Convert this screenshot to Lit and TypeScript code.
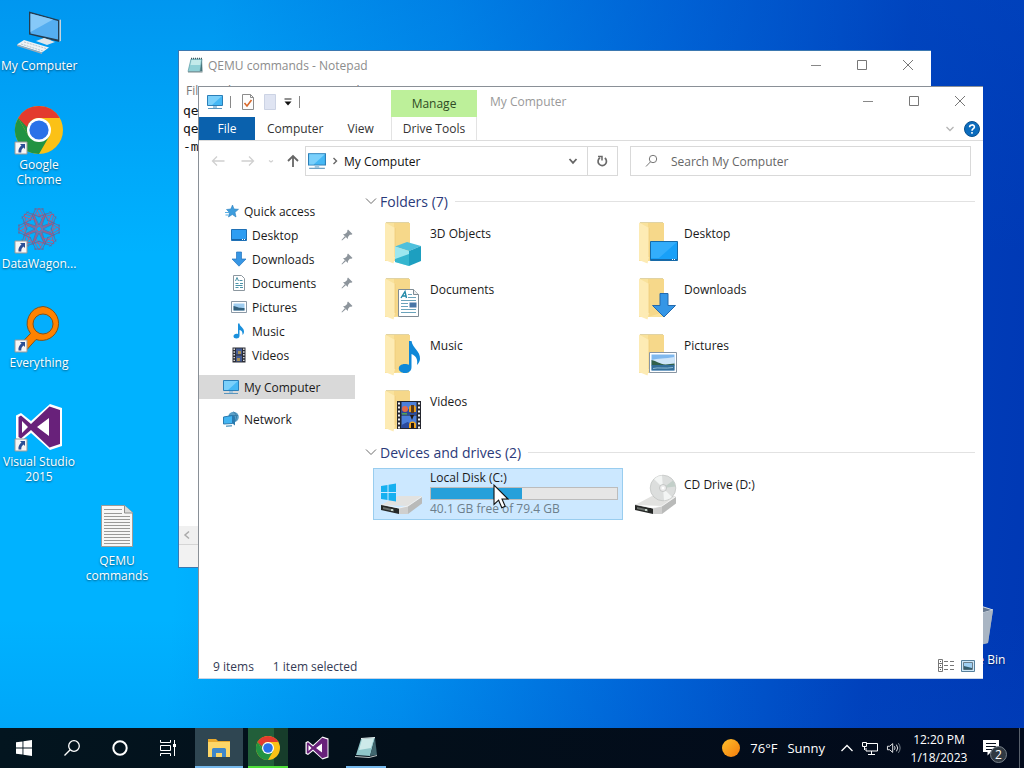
import { LitElement, html, svg, css, TemplateResult } from "lit";
import { customElement, property } from "lit/decorators.js";

const folder = svg`
  <path d="M4 4h24v38H4z" fill="#f9e29c"/>
  <path d="M13 4h16v33l-16 5z" fill="#f6d88a"/>
  <path d="M4 3.500 14 9v29l-1.500 6.500L4 41z" fill="#fdebb4"/>
  <path d="M14 9v29" stroke="#efcb78" stroke-width=".8"/>
  <path d="M5 3.500h23" stroke="#e0d3a4"/>`;

const monitor = svg`
  <path d="M.5 1.500h15v10H.5z" fill="#45b8f5" stroke="#2b7fb8"/>
  <path d="M1 2h14L5 11H1z" fill="#7bd0fb"/>
  <path d="M6 12h4v2H6z" fill="#9fc4dc"/><path d="M1 14.500h14" stroke="#5a95bd"/>`;

const arrowDown = svg`<path d="M5.500 1h5v7H15l-7 7.200L1 8h4.500z" fill="#3796e4" stroke="#2474bd" stroke-width=".7"/>`;

const filmFrame = svg`
  <path d="M16 14h24v28H16z" fill="#24262e"/>
  <path d="M20.500 15h15v12.500h-15zM20.500 28.500h15V41h-15z" fill="#4c7fda"/>
  <path d="M20.500 24l5-4 4 4 6-3v6.500h-15zM20.500 38l6-3 9 4v2h-15z" fill="#2b4a9d"/>
  <path d="M28 20a4 4 0 0 1 7 0v5h-7z" fill="#e9a020"/><path d="M30 18h3v8h-3z" fill="#5d3a16"/>
  <circle cx="24" cy="22" r="3" fill="#e36a4a"/><path d="M28 38a3.500 3.500 0 0 1 7 0v3h-7z" fill="#f0a51e"/>
  <path d="M29 28h4l-2 5zM30 36h3v5h-3z" fill="#26180d"/><path d="M21 26h5v1.500h-5z" fill="#54a455"/>
  <path d="M18 15.500v26M38 15.500v26" stroke="#f2f3f5" stroke-width="2" stroke-dasharray="2 2"/>`;

const picture = svg`
  <path d="M14.500 21.500h27v20h-27z" fill="#fff" stroke="#8795a3"/>
  <path d="M16.500 23.500h23v16h-23z" fill="#7fb8ee"/>
  <path d="M16.500 29c6-2 14-1 23-3v8h-23z" fill="#cfe5f8"/>
  <path d="M16.500 29c5 1 8 4 14 4.500l9-1v2h-23z" fill="#32604a"/>
  <path d="M16.500 34h23v5.500h-23z" fill="#346e99"/><path d="M18 37.500c5-1.500 12 .5 20-1" stroke="#8fbbd4" fill="none"/>`;

const drive = svg`
  <path d="M0 35 17 26h24L27 36z" fill="#e2e2e0"/>
  <path d="M27 36 41 26.500v7L27 44z" fill="#b9bab9"/>
  <path d="M0 34.500 18 38.500V44L0 40z" fill="#262827"/>
  <path d="M18 38l9-2v8h-9z" fill="#cfcfce"/>
  <path d="M2 37l11 2.600v2L2 39z" fill="#6a6f6c"/><circle cx="11" cy="40" r="1" fill="#e6f6e9"/>
  <path d="M0 34.500 18 38 27 36 41 26.500" fill="none" stroke="#f8f8f8" stroke-width=".8"/>`;

const chrome = svg`
  <circle cx="24" cy="24" r="24" fill="#fbc116"/>
  <path d="M3.200 12A24 24 0 0 0 24 48L34.400 30 24 24 13.600 30z" fill="#229342"/>
  <path d="M3.200 12 13.600 30 20 15z" fill="#229342"/>
  <path d="M3.200 12A24 24 0 0 1 44.800 12H24a12 12 0 0 0-12 9z" fill="#e33b2e"/>
  <circle cx="24" cy="24" r="12" fill="#fff"/><circle cx="24" cy="24" r="9.600" fill="#2a71e8"/>`;

const visualStudio = svg`
  <path d="M35 1 47 5v38l-12 4L16 30 6 38l-5-2.500v-23L6 10l10 8z" fill="#fff"/>
  <path d="M34.500 3.500 45 7v34l-10.500 3.500L16 27 6 35.500 3.500 34V14L6 12.500 16 21z" fill="#68217a"/>
  <path d="M34 15v18L22 24zM7 18l6 6-6 6z" fill="#fff"/>`;

const notepadPage = svg`
  <path d="M4 2h11l-2 12.500H1z" fill="#8fd0d6" stroke="#5b9aa3" stroke-width=".7"/>
  <path d="M4.500 3h9.500l-.8 5H3.500z" fill="#c3eaea"/>
  <path d="M15 2l.5 12.500H13z" fill="#46747b"/>
  <path d="M4 1.500h11" stroke="#415a60" stroke-width="1.500" stroke-dasharray="1 1"/>
  <path d="M1 15h14.500" stroke="#7b8b8e"/>`;

const petal = (angle: number) => svg`<g transform="rotate(${angle} 24 24)" fill="none" stroke-width=".8">
  <path d="M24 22 18.500 12 24 3l5.500 9z" stroke="#c04f74"/>
  <path d="M19 4h10M18 8l6 12 6-12M21 3l-6 13M27 3l6 13" stroke="#6a6596"/>
  <path d="M20 10h8M22 5l5 9" stroke="#d6506a"/></g>`;

const icons: Record<string, [string, TemplateResult]> = {
  monitor: ["0 0 16 16", monitor],
  desktopPc: ["0 0 48 48", svg`
    <path d="M14 4.500 44.500 13v22L14 27.500z" fill="#243c50"/>
    <path d="M15.500 6.500 43 14v18.500l-27.500-6z" fill="#55aef0"/>
    <path d="M15.500 6.500 38 12.500 15.500 25z" fill="#86c9f8"/>
    <path d="M44.500 13l1.500-.5v21l-1.500 1.500z" fill="#c5d4df"/>
    <path d="M28 31l8 2v3l-8-2z" fill="#9caab5"/>
    <path d="M21 34l8-3 11 4-8 3z" fill="#dfe6eb"/>
    <path d="M2 37.500 9 33l25 7.500-7 5z" fill="#eef2f5"/><path d="M2 37.500l25 8v1.500L2 39z" fill="#9eabb5"/>
    <path d="M6 37l22 7M9 35l22 6.500" stroke="#b9c5ce" stroke-dasharray="2 1"/>`],
  chrome: ["0 0 48 48", chrome],
  wagon: ["0 0 48 48", svg`${[0, 45, 90, 135, 180, 225, 270, 315].map(petal)}`],
  everything: ["0 0 48 48", svg`
    <path d="M28 2.500a17 17 0 1 1-7 33l-9 10-7-5 10.500-11A17 17 0 0 1 28 2.500z" fill="#ff8200" stroke="#80521c"/>
    <circle cx="28" cy="20" r="10" fill="#04aefd" stroke="#80521c"/>`],
  vs: ["0 0 48 48", visualStudio],
  textFile: ["0 0 48 48", svg`
    <path d="M8.500 3.500h23l8 7v34h-31z" fill="#f7f7f6" stroke="#9b9b98"/>
    <path d="M31.500 3.500v7.500h8" fill="#dcdcda" stroke="#8f8f8c"/>
    <path d="M11 7.500h18M11 11.500h18M11 14.500h26M11 17.500h26M11 20.500h26M11 23.500h26M11 26.500h26M11 29.500h26M11 32.500h26M11 35.500h26M11 38.500h26M11 41.500h26" stroke="#9a9a98"/>`],
  bin: ["0 0 48 48", svg`
    <path d="M7 8l17-5 19 6-5 33-15 4-11-4z" fill="#8e9fb5"/>
    <path d="M7 8l17-5 19 6-18 5z" fill="#66788f" stroke="#d4dde6"/>
    <path d="M25 14l18-5-5 33-14 3z" fill="#a9b5c3"/>`],
  shortcut: ["0 0 12 12", svg`
    <path d="M0 0h12v12H0z" fill="#f6f6f6" stroke="#999"/>
    <path d="M5 2h5v5L8.500 5.500C6.500 7 6.300 8.500 6.300 10.500H3.500C3 7.500 4.500 5 6.500 3.500z" fill="#2c4f96"/>`],
  notepad: ["0 0 16 16", notepadPage],
  check: ["0 0 16 16", svg`
    <path d="M2.500.5h8l3 3v12h-11z" fill="#fdfdfd" stroke="#8c8c8c"/><path d="M10.500.5v3h3" fill="none" stroke="#8c8c8c"/>
    <path d="M4.500 9l2.500 3 4.500-6" fill="none" stroke="#d8692c" stroke-width="1.600"/>`],
  newFolder: ["0 0 16 16", svg`<path d="M2.500.5h11v15h-11z" fill="#dfe4f2" stroke="#ccd3e4"/>`],
  more: ["0 0 8 8", svg`<path d="M.5 1h7" stroke="#222" /><path d="M.5 3.500h7L4 7.500z" fill="#111"/>`],
  minimize: ["0 0 10 10", svg`<path d="M0 5.500h10" stroke="#888"/>`],
  maximize: ["0 0 10 10", svg`<path d="M.5.5h9v9h-9z" fill="none" stroke="#777"/>`],
  close: ["0 0 10 10", svg`<path d="M0 0l10 10M10 0 0 10" stroke="#777"/>`],
  back: ["0 0 14 12", svg`<path d="M13.500 6H1.500M6 1.500 1.500 6 6 10.500" fill="none" stroke="#d0d0d0" stroke-width="1.300"/>`],
  forward: ["0 0 14 12", svg`<path d="M.5 6h12M8 1.500 12.500 6 8 10.500" fill="none" stroke="#d0d0d0" stroke-width="1.300"/>`],
  up: ["0 0 12 12", svg`<path d="M6 12V1.500M1 6l5-5 5 5" fill="none" stroke="#666" stroke-width="1.800"/>`],
  tiny: ["0 0 8 8", svg`<path d="M2 3.500 4 5l2-1.500" fill="none" stroke="#d0d0d0" stroke-width="1.200"/>`],
  down: ["0 0 8 8", svg`<path d="M.5 2 4 5.800 7.500 2" fill="none" stroke="#666" stroke-width="1.800"/>`],
  downPale: ["0 0 8 8", svg`<path d="M.5 2 4 5.500 7.500 2" fill="none" stroke="#b5b5b5" stroke-width="1.300"/>`],
  right: ["0 0 8 8", svg`<path d="M2.500 1 5.500 4l-3 3" fill="none" stroke="#666" stroke-width="1.400"/>`],
  left: ["0 0 8 8", svg`<path d="M6 .5 2 4l4 3.500" fill="none" stroke="#aaa" stroke-width="1.500"/>`],
  group: ["0 0 12 8", svg`<path d="M1 1.500 6 6.500 11 1.500" fill="none" stroke="#6d6d6d"/>`],
  refresh: ["0 0 12 12", svg`
    <path d="M8.800 3A4.200 4.200 0 1 1 4 2.800" fill="none" stroke="#6a6a6a" stroke-width="1.700"/>
    <path d="M2 1.500h4v4" fill="none" stroke="#6a6a6a" stroke-width="1.500"/>`],
  search: ["0 0 16 16", svg`<circle cx="9" cy="6" r="3.700" fill="none" stroke="#777"/><path d="M6.500 8.800 2 13.500" stroke="#777"/>`],
  help: ["0 0 16 16", svg`<circle cx="8" cy="8" r="7.500" fill="#0b6cbd" stroke="#09508f"/>
    <path d="M5.600 6.200c0-3 4.800-3 4.800-.2C10.400 7.700 8 7.700 8 9.700M8 11v1.800" fill="none" stroke="#fff" stroke-width="1.600"/>`],
  star: ["0 0 16 16", svg`<path d="M9.500 2l1.500 4 4.500.3-3.500 3 1 4.700-3.700-2.500L5.500 14l1-4.500L3.500 6.500l4.300-.5z" fill="#3d9ddd" stroke="#2b7fbe" stroke-width=".6"/><path d="M2 9.500h4M2.500 12h3" stroke="#58aee4"/>`],
  screen: ["0 0 16 16", svg`<path d="M.5 2.500h15v11H.5z" fill="#2e9df2" stroke="#1f70b5"/><path d="M1 12.500h14" stroke="#1564a8"/><path d="M11 12.500h3" stroke="#fff" stroke-dasharray="1 1"/>`],
  download: ["0 0 16 16", arrowDown],
  page: ["0 0 16 16", svg`<path d="M2.500.5h8l3 3v12h-11z" fill="#fff" stroke="#8c979f"/>
    <path d="M4.500 6 6 2.500 7.500 6M8.500 5.500h3M4.500 8.500h3M9 8.500h3M4.500 10.500h7M4.500 12.500h3M9 12.500h3" fill="none" stroke="#4b93a8"/>`],
  image: ["0 0 16 16", svg`<path d="M.5 2.500h15v11H.5z" fill="#fff" stroke="#8b99a6"/><path d="M2.500 4.500h11v7h-11z" fill="#9fcdf0"/><path d="M2.500 7c4 1 5 2 11 2v2.500h-11z" fill="#33607c"/>`],
  note: ["0 0 16 16", svg`<path d="M7 .5h1.500c.5 3.500 4.500 4 4.500 8 0 1.500-.5 2.500-1.500 3.500.3-3-.8-4.500-3-5v6c0 3.300-6 3.300-6 .3 0-2.300 2.500-3 4.500-2.300z" fill="#1b90dc"/>`],
  film: ["0 0 16 16", svg`<path d="M1.500.5h13v15h-13z" fill="#2b2d35"/><path d="M5 1.500h6v6H5zM5 8.500h6v6H5z" fill="#465e97"/>
    <path d="M7 4h3v3H7zM6 11h3v3H6z" fill="#a79056"/><path d="M3.200 1.500v14M12.800 1.500v14" stroke="#eee" stroke-width="1.400" stroke-dasharray="1.400 1.400"/>`],
  network: ["0 0 16 16", svg`<circle cx="10.500" cy="6" r="5.300" fill="#5c9fc6"/><path d="M10.500 1c4 2 4 8 0 10M6 4.500h9" stroke="#3a7ea8" fill="none"/>
    <path d="M.5 6 9.500 4.500v8L.5 13z" fill="#43b5f2" stroke="#2a7bb0"/><path d="M9.500 4.500l2.500 1v9l-2.500-2z" fill="#2a7bb0"/><path d="M3 14.500l6-.5v1.500l-6 .5z" fill="#6aa4c4"/>`],
  pin: ["0 0 12 12", svg`<path d="M7 .5 11.500 5l-1.200.7-1.500 0L7 8l-.2 2L2 5.200l2-.2 2.200-2 .1-1.500zM3.800 7.200l1 1L1 11.500l-.5-.5z" fill="#8d959c"/>`],
  folder3d: ["0 0 48 48", svg`${folder}<path d="M14 27.500 26 23l14 4-12 5z" fill="#4fc0dc"/><path d="M14 27.500l14 4.500v15l-14-4z" fill="#9de7ef"/><path d="M14 40l14-5v12l-14-4z" fill="#35b6cf"/><path d="M28 32l12-5v15l-12 5z" fill="#1d9fc0"/>`],
  folderDocs: ["0 0 48 48", svg`${folder}<path d="M17.500 14.500h15l5 5v22h-20z" fill="#fff" stroke="#7f8c95"/><path d="M32.500 14.500v5h5" fill="#eee" stroke="#7f8c95"/>
    <path d="M20 23l4-6.500 1.500 6.500M21.500 21h4" fill="none" stroke="#2289a8" stroke-width="1.400"/>
    <path d="M27 19.500h4M27 22.500h8M20 25.500h15M20 28.500h7M20 31.500h7M20 34.500h15M20 37.500h15" stroke="#6aa3bb"/><path d="M28.500 27.500h7v5h-7z" fill="#4775a6"/>`],
  folderMusic: ["0 0 48 48", svg`${folder}<path d="M28 10h2.500c1 7 9 10 8.500 18-.2 2-1 4-3 6 1-6-1-9-5.500-11v13c0 4-3 6-6.500 6-8 0-8.500-9 0-9 1.500 0 3 .3 4 .8z" fill="#0f88d8"/>`],
  folderVideos: ["0 0 48 48", svg`${folder}${filmFrame}`],
  folderDesktop: ["0 0 48 48", svg`${folder}<path d="M15.500 22.500h27v19h-27z" fill="#18a0f8" stroke="#176aa8"/><path d="M16 23h26L24 39h-8z" fill="#33adfb"/><path d="M16 40.500h26" stroke="#1668a8"/><path d="M37 40.500h4" stroke="#fff" stroke-dasharray="1 1"/>`],
  folderDown: ["0 0 48 48", svg`${folder}<path d="M25 18.500h8v12h7.500L29 42 17.500 30.500H25z" fill="#3596e6" stroke="#2369ad"/>`],
  folderPictures: ["0 0 48 48", svg`${folder}${picture}`],
  localDisk: ["0 0 48 48", svg`${drive}<path d="M0 16l6.500-1v7H0zM7.500 14.800 15 13.500V22H7.500zM0 23h6.500v7L0 29zM7.500 23H15v8.500l-7.500-1.300z" fill="#16b0f0"/>`],
  cdDrive: ["0 0 48 48", svg`${drive}<circle cx="28" cy="18" r="12.800" fill="#dcdedd" stroke="#bfc1c0" stroke-width=".7"/>
    <path d="M28 18 19 9a12.500 12.500 0 0 1 8-3.500zM28 18l9 9a12.500 12.500 0 0 1-8 3.500z" fill="#f3f5f4"/><path d="M28 18 38 10.500a12.500 12.500 0 0 1 2.500 6z" fill="#c3cfc9"/>
    <circle cx="28" cy="18" r="3.500" fill="#ececec" stroke="#b5b7b6" stroke-width=".7"/><circle cx="28" cy="18" r="1.300" fill="#fff"/>`],
  details: ["0 0 16 14", svg`<path d="M.5.500h4v12h-4zM.5 4.500h4M.5 8.500h4" fill="none" stroke="#777"/><path d="M2 2.500h1M2 6.500h1M2 10.500h1" stroke="#555"/>
    <path d="M6 2.500h4M12 2.500h4M6 6.500h4M12 6.500h4M6 10.500h4M12 10.500h4" stroke="#777"/>`],
  tiles: ["0 0 14 12", svg`<path d="M.5.500h13v11H.5z" fill="#cfe8f8" stroke="#56809c"/><path d="M2.500 2.500h9v7h-9z" fill="#9ecff2" stroke="#6c7f8b"/><path d="M3 6l8 2v1.500H3z" fill="#345d6c"/>`],
  windows: ["0 0 16 16", svg`<path d="M0 2.300 6.500 1.400v6.100H0zM7.400 1.300 16 0v7.500H7.400zM0 8.400h6.500v6.200L0 13.700zM7.400 8.400H16V16l-8.600-1.300z" fill="#fff"/>`],
  taskSearch: ["0 0 16 16", svg`<circle cx="10" cy="6" r="5.300" fill="none" stroke="#fff" stroke-width="1.300"/><path d="M6.200 9.800.5 15.500" stroke="#fff" stroke-width="1.300"/>`],
  cortana: ["0 0 16 16", svg`<circle cx="8" cy="8" r="6.700" fill="none" stroke="#fff" stroke-width="2"/>`],
  taskView: ["0 0 16 16", svg`<path d="M.5 0v2.500h10V0M.5 16v-2.500h10V16M.5 5.500h10v5H.5zM14.500 0v16" fill="none" stroke="#fff"/><path d="M13 4h3v3h-3z" fill="#fff"/>`],
  explorer: ["0 0 24 20", svg`<path d="M1 1h8l2 2h12v3H1z" fill="#e9a92c"/><path d="M1 4h22v15H1z" fill="#fdd667"/>
    <path d="M5 19v-7.500Q5 10 6.500 10h11Q19 10 19 11.500V19h-4v-4H9v4z" fill="#3f86c8"/><path d="M9 15h6v4H9z" fill="#fdd667"/>`],
  taskNotepad: ["0 0 24 24", svg`<path d="M7 3l14-1-5 18-14-1z" fill="#8fc6c9"/><path d="M8 3l12-1-3 10-12 2z" fill="#cdeaea"/><path d="M21 2l2 17-7 1z" fill="#41666e"/><path d="M7 2.500l14-1" stroke="#e8f4f4"/><path d="M1 20.500l14 1 8-2" stroke="#c0c8c9" fill="none"/>`],
  sun: ["0 0 18 18", svg`<defs><linearGradient id="sunFill" x1="0" y1="0" x2="1" y2="1"><stop stop-color="#ffc02c"/><stop offset="1" stop-color="#f47b0c"/></linearGradient></defs><circle cx="9" cy="9" r="9" fill="url(#sunFill)"/>`],
  trayUp: ["0 0 12 12", svg`<path d="M.5 9 6 3.500 11.500 9" fill="none" stroke="#fff" stroke-width="1.300"/>`],
  trayNet: ["0 0 16 14", svg`<path d="M5 2.500h10.500v7.500H4V7M9.500 10v3M6 13.500h7" fill="none" stroke="#fff"/><path d="M.5 1.500h4v4h-4zM2.500 5.500V9" fill="#0a1420" stroke="#fff"/>`],
  trayVol: ["0 0 16 14", svg`<path d="M.5 5h2.500l3.500-3v10L3 9H.5z" fill="none" stroke="#fff"/><path d="M8.500 5q1.500 2 0 4M10.800 3.200q3 3.800 0 7.600" fill="none" stroke="#fff"/><path d="M13 1.500q4 5.500 0 11" fill="none" stroke="#8a949c"/>`],
  action: ["0 0 16 16", svg`<path d="M0 0h16v12H8l-3.500 3.500V12H0z" fill="#fff"/><path d="M3 3.500h10M3 6.500h10M3 9.500h6" stroke="#07101e"/>`],
  pointer: ["0 0 16 25", svg`<path d="M1 1v19.500l4.600-4.300 3.200 7.500 3.400-1.500-3.200-7.200h6z" fill="#fff" stroke="#111" stroke-width="1.100"/>`],
};

@customElement("ui-icon")
class UiIcon extends LitElement {
  @property() name = "";
  static styles = css`
    :host { display: block; flex: none; width: 16px; height: 16px; }
    svg { display: block; width: 100%; height: 100%; overflow: visible; }
  `;
  render() {
    const [box, body] = icons[this.name];
    return html`<svg viewBox=${box} aria-hidden="true">${body}</svg>`;
  }
}

const reset = css`
  * { box-sizing: border-box; }
  button, input { font: inherit; color: inherit; border: 0; background: none; padding: 0; margin: 0; }
  a { color: inherit; text-decoration: none; }
  ul, h1, h2, p { margin: 0; padding: 0; list-style: none; font: inherit; }
  .row { display: flex; align-items: center; }
  .grow { flex: 1; min-width: 0; }
  .s8 { width: 8px; height: 8px; }
  .s10 { width: 10px; height: 10px; }
  .s12 { width: 12px; height: 12px; }
  .s14 { width: 14px; height: 14px; }
  .s24 { width: 24px; height: 24px; }
`;

@customElement("window-buttons")
class WindowButtons extends LitElement {
  static styles = [reset, css`
    :host { display: flex; }
    button { width: 46px; height: 28px; display: grid; place-items: center; }
  `];
  render() {
    return html`${["minimize", "maximize", "close"].map(
      (n) => html`<button aria-label=${n}><ui-icon class="s10" name=${n}></ui-icon></button>`)}`;
  }
}

@customElement("notepad-window")
class NotepadWindow extends LitElement {
  static styles = [reset, css`
    :host { display: flex; flex-direction: column; background: #fff; border: 1px solid #3b78b0; border-right: 0; color: #8c8c8c; overflow: hidden; }
    .title { height: 28px; padding-left: 8px; gap: 5px; }
    .menu { height: 22px; padding-left: 7px; gap: 12px; color: #777; }
    .text { flex: 1; margin: 0; padding: 1px 0 0 4px; font: 13px/18px "DejaVu Sans Mono", monospace; color: #111; }
    .scroll { height: 18px; padding-left: 4px; background: #f0f0f0; }
    .foot { height: 23px; background: #f2f2f2; border-top: 1px solid #d5d5d5; }
  `];
  render() {
    return html`
      <header class="row title"><ui-icon name="notepad"></ui-icon><h1 class="grow">QEMU commands - Notepad</h1><window-buttons></window-buttons></header>
      <nav class="row menu">${["File", "Edit", "Format", "View", "Help"].map((m) => html`<button>${m}</button>`)}</nav>
      <pre class="text">${"qe\nqe\n-m"}</pre>
      <div class="row scroll"><ui-icon class="s8" name="left"></ui-icon></div>
      <div class="foot"></div>`;
  }
}

interface Tile { icon: string; label: string; used?: number; note?: string; }

const folders: Tile[] = [
  { icon: "folder3d", label: "3D Objects" }, { icon: "folderDesktop", label: "Desktop" },
  { icon: "folderDocs", label: "Documents" }, { icon: "folderDown", label: "Downloads" },
  { icon: "folderMusic", label: "Music" }, { icon: "folderPictures", label: "Pictures" },
  { icon: "folderVideos", label: "Videos" },
];
const drives: Tile[] = [
  { icon: "localDisk", label: "Local Disk (C:)", used: 0.49, note: "40.1 GB free of 79.4 GB" },
  { icon: "cdDrive", label: "CD Drive (D:)" },
];
const places: [string, string, boolean][] = [
  ["screen", "Desktop", true], ["download", "Downloads", true], ["page", "Documents", true],
  ["image", "Pictures", true], ["note", "Music", false], ["film", "Videos", false],
];

@customElement("explorer-window")
class ExplorerWindow extends LitElement {
  static styles = [reset, css`
    :host { display: flex; flex-direction: column; background: #fff; border: 1px solid #8a9097; border-right: 0; border-bottom-color: #c8d4e6; color: #1a1a1a; overflow: hidden; }
    .head { display: flex; border-bottom: 1px solid #dcdcdc; }
    .start { width: 192px; }
    .quick { height: 30px; padding-left: 8px; gap: 7px; }
    .rule { width: 1px; height: 12px; background: #888; }
    .gap { margin-left: 2px; }
    .pair { gap: 6px; }
    .tabs { display: flex; height: 23px; line-height: 23px; color: #333; }
    .tabs button { flex: none; padding: 0 12px; }
    .tabs .file { width: 56px; padding: 0; background: #0a61ad; color: #fff; }
    .context { width: 86px; padding-top: 3px; display: flex; flex-direction: column; }
    .manage { height: 27px; background: #bdf09a; color: #2f4b25; }
    .tools { height: 23px; border: solid #e3e3e3; border-width: 0 1px; color: #333; }
    .caption { height: 30px; padding-left: 13px; color: #999; align-items: stretch; line-height: 30px; }
    .help { height: 23px; justify-content: flex-end; gap: 10px; padding-right: 3px; }
    .bar { height: 40px; padding: 0 12px; }
    .nav { gap: 12px; margin-right: 6px; }
    .history { gap: 16px; }
    .navarrow { width: 14px; height: 12px; }
    .path { flex: 282; height: 30px; border: 1px solid #d9d9d9; padding: 0 10px 0 2px; gap: 5px; color: #111; }
    .pc { width: 18px; height: 18px; }
    .reload { width: 30px; height: 30px; border: 1px solid #d9d9d9; border-left: 0; display: grid; place-items: center; margin-right: 12px; }
    .find { flex: 342; height: 30px; border: 1px solid #d9d9d9; padding-left: 13px; gap: 11px; color: #666; }
    .find input { outline: 0; width: 100%; }
    .find input::placeholder { color: #666; opacity: 1; }
    .body { flex: 1; display: flex; min-height: 0; }
    .side { width: 156px; padding-top: 18px; }
    .side a { display: flex; align-items: center; height: 24px; gap: 5px; padding: 0 2px 0 24px; }
    .side a.sub { padding-left: 32px; }
    .side a.top { margin-top: 8px; }
    .side a.on { background: #d9d9d9; }
    .main { flex: 1; padding: 10px 8px 0 10px; min-width: 0; }
    .group { display: flex; align-items: center; height: 20px; font-size: 14px; color: #2b3a7a; gap: 3px; margin-bottom: 6px; }
    .group i { flex: 1; height: 1px; background: #e2e2e2; margin-left: 4px; }
    .chev { width: 12px; height: 8px; }
    .tiles { display: grid; grid-template-columns: repeat(auto-fill, 250px); gap: 4px; padding-left: 8px; margin-bottom: 5px; }
    .tile { height: 52px; display: flex; padding: 1px 4px 1px 7px; border: 1px solid transparent; text-align: left; line-height: 16px; }
    .tile.on { background: #cce8ff; border-color: #99cdef; }
    .tile ui-icon { width: 48px; height: 48px; }
    .name { padding: 7px 0 0 1px; }
    .on .name { padding-top: 0; }
    .meter { height: 13px; margin: 1px 0; background: #e6e6e6; border: 1px solid #bcbcbc; }
    .fill { height: 100%; background: #26a0da; }
    .note { color: #6d7f8c; }
    .status { height: 24px; padding: 0 8px 0 14px; gap: 19px; color: #333a55; }
    .views { gap: 7px; }
    .details { width: 16px; height: 14px; }
    .large { width: 14px; height: 12px; }
  `];

  private tile(t: Tile) {
    const on = t.used !== undefined;
    return html`<button class="tile ${on ? "on" : ""}"><ui-icon name=${t.icon}></ui-icon>
      <div class="grow name">${t.label}${on ? html`
        <div class="meter" role="progressbar" aria-label="Space used" aria-valuenow=${t.used! * 100}><div class="fill" style="width:${t.used! * 100}%"></div></div>
        <div class="note">${t.note}</div>` : ""}</div></button>`;
  }

  private group(title: string, tiles: Tile[]) {
    return html`<section><h2 class="group"><ui-icon class="chev" name="group"></ui-icon>${title}<i></i></h2>
      <div class="tiles">${tiles.map((t) => this.tile(t))}</div></section>`;
  }

  render() {
    return html`
      <header class="head">
        <div class="start">
          <div class="row quick">
            <ui-icon name="monitor"></ui-icon><span class="rule"></span>
            <div class="row gap pair">
              <button aria-label="Properties"><ui-icon name="check"></ui-icon></button>
              <button aria-label="New folder"><ui-icon name="newFolder"></ui-icon></button>
              <button aria-label="Customize"><ui-icon class="s8" name="more"></ui-icon></button>
            </div>
            <span class="rule"></span>
          </div>
          <div class="tabs"><button class="file">File</button><button>Computer</button><button>View</button></div>
        </div>
        <div class="context"><button class="manage">Manage</button><button class="tools">Drive Tools</button></div>
        <div class="grow">
          <div class="row caption"><h1 class="grow">My Computer</h1><window-buttons></window-buttons></div>
          <div class="row help"><button aria-label="Expand the ribbon"><ui-icon class="s8" name="downPale"></ui-icon></button><button aria-label="Help"><ui-icon name="help"></ui-icon></button></div>
        </div>
      </header>
      <div class="row bar">
        <div class="row nav">
          <div class="row history">
            <button aria-label="Back"><ui-icon class="navarrow" name="back"></ui-icon></button>
            <button aria-label="Forward"><ui-icon class="navarrow" name="forward"></ui-icon></button>
          </div>
          <button aria-label="Recent"><ui-icon class="s8" name="tiny"></ui-icon></button>
          <button aria-label="Up"><ui-icon class="s12" name="up"></ui-icon></button>
        </div>
        <div class="row path"><ui-icon class="pc" name="monitor"></ui-icon><ui-icon class="s8" name="right"></ui-icon><a href="#computer" class="grow">My Computer</a><button aria-label="History"><ui-icon class="s8" name="down"></ui-icon></button></div>
        <button class="reload" aria-label="Refresh"><ui-icon class="s12" name="refresh"></ui-icon></button>
        <label class="row find"><ui-icon name="search"></ui-icon><input type="text" aria-label="Search" placeholder="Search My Computer"></label>
      </div>
      <div class="body">
        <nav class="side">
          <a href="#quick"><ui-icon name="star"></ui-icon>Quick access</a>
          ${places.map(([icon, label, pinned]) => html`<a class="sub" href="#${label}"><ui-icon name=${icon}></ui-icon><span class="grow">${label}</span>${pinned ? html`<ui-icon class="s12" name="pin"></ui-icon>` : ""}</a>`)}
          <a class="top on" href="#computer"><ui-icon name="monitor"></ui-icon>My Computer</a>
          <a class="top" href="#network"><ui-icon name="network"></ui-icon>Network</a>
        </nav>
        <main class="main">${this.group("Folders (7)", folders)}${this.group("Devices and drives (2)", drives)}</main>
      </div>
      <footer class="row status"><span>9 items</span><span class="grow">1 item selected</span>
        <div class="row views"><button aria-label="Details"><ui-icon class="details" name="details"></ui-icon></button><button aria-label="Large icons"><ui-icon class="large" name="tiles"></ui-icon></button></div></footer>`;
  }
}

@customElement("task-bar")
class TaskBar extends LitElement {
  static styles = [reset, css`
    :host { display: flex; align-items: stretch; height: 40px; color: #fff; background: linear-gradient(90deg, #03151f, #030f1a 40%, #020a1c); }
    .btn { width: 48px; height: 40px; display: grid; place-items: center; border-bottom: 2px solid transparent; padding-top: 2px; }
    .apps { display: flex; gap: 1px; margin-left: 3px; }
    .open { background: #2f4652; border-bottom-color: #76b9ed; }
    .slim { width: 40px; margin: 0 4px; }
    .green { background: linear-gradient(90deg, #225f3a 66%, #173d2b 66%); border-bottom-color: #4ee03a; }
    .under { border-bottom-color: #76b9ed; }
    .s18 { width: 18px; height: 18px; }
    .folder { width: 24px; height: 20px; }
    .weather { display: flex; align-items: center; gap: 10px; font-size: 13px; padding-right: 16px; }
    .tray { display: flex; align-items: center; gap: 9px; }
    .clock { width: 60px; text-align: center; line-height: 18px; padding-top: 2px; margin-left: 8px; }
    .actions { position: relative; width: 50px; display: grid; place-items: center; padding-right: 6px; }
    .badge { position: absolute; left: 21px; top: 18px; width: 17px; height: 17px; border-radius: 50%; background: #303942; border: 1px solid #78818a; font-size: 12px; line-height: 15px; text-align: center; }
    .show { width: 5px; border-left: 1px solid #58606c; }
  `];
  render() {
    return html`
      <button class="btn" aria-label="Start"><ui-icon name="windows"></ui-icon></button>
      <button class="btn" aria-label="Search"><ui-icon name="taskSearch"></ui-icon></button>
      <button class="btn" aria-label="Cortana"><ui-icon name="cortana"></ui-icon></button>
      <button class="btn" aria-label="Task view"><ui-icon name="taskView"></ui-icon></button>
      <div class="apps grow">
        <button class="btn open" aria-label="File Explorer"><ui-icon class="folder" name="explorer"></ui-icon></button>
        <button class="btn slim green" aria-label="Google Chrome"><ui-icon class="s24" name="chrome"></ui-icon></button>
        <button class="btn slim" aria-label="Visual Studio"><ui-icon class="s24" name="vs"></ui-icon></button>
        <button class="btn slim under" aria-label="Notepad"><ui-icon class="s24" name="taskNotepad"></ui-icon></button>
      </div>
      <button class="weather"><ui-icon class="s18" name="sun"></ui-icon><span>76°F</span><span>Sunny</span></button>
      <div class="tray">
        <button aria-label="Hidden icons"><ui-icon class="s12" name="trayUp"></ui-icon></button>
        <button aria-label="Network"><ui-icon name="trayNet"></ui-icon></button>
        <button aria-label="Volume"><ui-icon class="s14" name="trayVol"></ui-icon></button>
      </div>
      <button class="clock">12:20 PM<br>1/18/2023</button>
      <button class="actions" aria-label="Notifications"><ui-icon name="action"></ui-icon><span class="badge">2</span></button>
      <button class="show" aria-label="Show desktop"></button>`;
  }
}

const shortcuts: [string, string, boolean][] = [
  ["desktopPc", "My Computer", false], ["chrome", "Google Chrome", true], ["wagon", "DataWagon...", true],
  ["everything", "Everything", true], ["vs", "Visual Studio 2015", true], ["textFile", "QEMU commands", false],
];

@customElement("app-root")
class AppRoot extends LitElement {
  static styles = [reset, css`
    :host { display: flex; flex-direction: column; height: 100vh; font: 12px/15px "Open Sans", "Noto Sans", sans-serif; overflow: hidden; }
    .desktop { flex: 1; position: relative; overflow: hidden;
      background: linear-gradient(180deg, rgba(0, 80, 200, .28), transparent 35%, transparent 85%, rgba(0, 80, 200, .12)),
        linear-gradient(94deg, #00b2ff 0%, #00b2ff 20%, #0092f0 42%, #0066d8 64%, #0040bb 85%, #0038b4 100%); }
    .icons { display: grid; grid-template-columns: 76px 76px; grid-auto-rows: 99px; column-gap: 2px; padding: 7px 1px; }
    .icons .item { grid-column: 1; }
    .icons .item:last-child { grid-column: 2; grid-row: 6; }
    .item { display: flex; flex-direction: column; align-items: center; gap: 3px; color: #fff; text-align: center; text-shadow: 0 1px 2px rgba(0, 0, 0, .5); }
    .label { width: 76px; }
    .pic { position: relative; }
    .pic ui-icon { width: 48px; height: 48px; }
    .pic .arrow { position: absolute; left: 0; bottom: 0; width: 12px; height: 12px; }
    .item:first-child .label { white-space: nowrap; }
    .recycle { position: absolute; right: 12px; top: 601px; width: 76px; }
    notepad-window { position: absolute; inset: 50px 93px 160px 178px; }
    explorer-window { position: absolute; inset: 86px 41px 49px 198px; }
    .pointer { position: absolute; left: 493px; top: 484px; width: 16px; height: 25px; }
  `];
  private item(icon: string, label: string, link: boolean, extra = "") {
    return html`<a class="item ${extra}" href="#${icon}"><div class="pic"><ui-icon name=${icon}></ui-icon>${link ? html`<ui-icon class="arrow" name="shortcut"></ui-icon>` : ""}</div><span class="label">${label}</span></a>`;
  }
  render() {
    return html`
      <div class="desktop">
        <div class="icons">${shortcuts.map(([i, l, s]) => this.item(i, l, s))}</div>
        ${this.item("bin", "Recycle Bin", false, "recycle")}
        <notepad-window></notepad-window>
        <explorer-window></explorer-window>
        <ui-icon class="pointer" name="pointer"></ui-icon>
      </div>
      <task-bar></task-bar>`;
  }
}
